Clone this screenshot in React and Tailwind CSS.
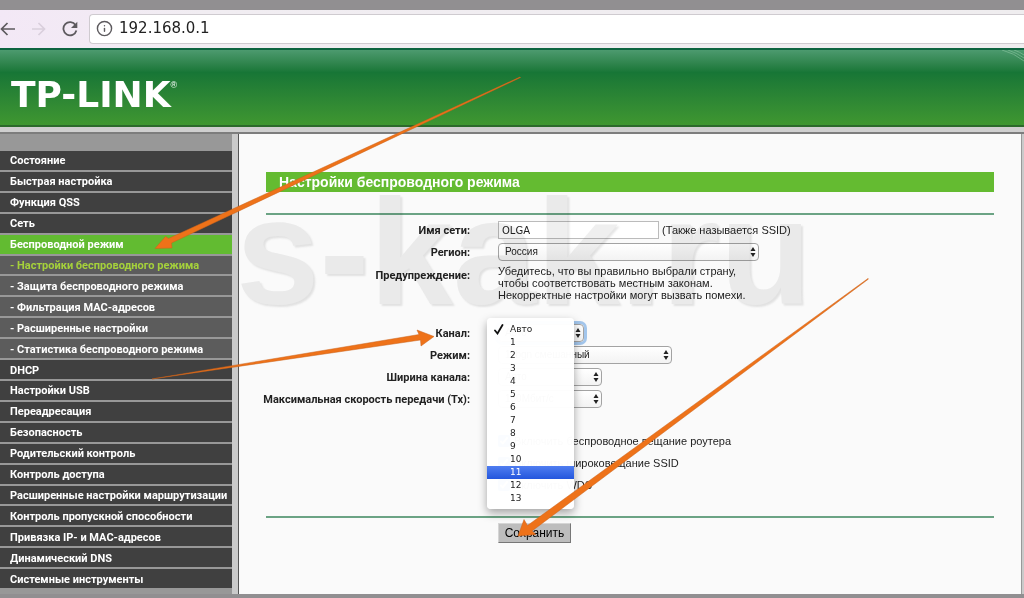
import { useState } from "react";
import { Info } from "lucide-react";

const menu = [
  { title: "Состояние" },
  { title: "Быстрая настройка" },
  { title: "Функция QSS" },
  { title: "Сеть" },
  { title: "Беспроводной режим", active: true },
  { title: "- Настройки беспроводного режима", sub: true, active: true },
  { title: "- Защита беспроводного режима", sub: true },
  { title: "- Фильтрация MAC-адресов", sub: true },
  { title: "- Расширенные настройки", sub: true },
  { title: "- Статистика беспроводного режима", sub: true },
  { title: "DHCP" },
  { title: "Настройки USB" },
  { title: "Переадресация" },
  { title: "Безопасность" },
  { title: "Родительский контроль" },
  { title: "Контроль доступа" },
  { title: "Расширенные настройки маршрутизации" },
  { title: "Контроль пропускной способности" },
  { title: "Привязка IP- и MAC-адресов" },
  { title: "Динамический DNS" },
  { title: "Системные инструменты" },
];

const channels = ["Авто", "1", "2", "3", "4", "5", "6", "7", "8", "9", "10", "11", "12", "13"];

function menuColor(item) {
  if (item.sub) return item.active ? "bg-[#5c5c5c] text-[#a5d13b]" : "bg-[#5c5c5c] text-white";
  return item.active ? "bg-[#62bb31] text-white" : "bg-[#404040] text-white";
}

function BrowserBar() {
  return (
    <div className="flex h-[38px] items-center bg-gradient-to-r from-[#f3e8f6] via-[#f1edf2] via-20% to-[#efedef] pt-[3px] pb-1">
      <div className="flex w-[89px] shrink-0 items-center gap-4 text-[#5d5a5e]">
        <button aria-label="Назад">
          <svg width="15" height="14" viewBox="0 0 15 14" fill="none" stroke="currentColor" strokeWidth="1.7">
            <path d="M15 7H2M7.500 1L1.500 7l6 6" />
          </svg>
        </button>
        <button aria-label="Вперёд" className="text-[#d9cfdc]">
          <svg width="15" height="14" viewBox="0 0 15 14" fill="none" stroke="currentColor" strokeWidth="1.7">
            <path d="M1 7h12M7.500 1l6 6-6 6" />
          </svg>
        </button>
        <button aria-label="Обновить">
          <svg width="16" height="16" viewBox="0 0 16 16" fill="none">
            <path d="M13.600 4.200A6.600 6.600 0 1 0 14.400 9.500" stroke="currentColor" strokeWidth="1.8" />
            <path d="M15.300 0.800v6.200H9z" fill="currentColor" />
          </svg>
        </button>
      </div>
      <div className="flex h-[30px] flex-1 items-center gap-[6px] rounded-l border border-r-0 border-[#cfcbd0] bg-white pl-[6px]">
        <Info size={17} strokeWidth={2} className="shrink-0 text-[#5d5a5e]" />
        <input
          aria-label="Адрес"
          defaultValue="192.168.0.1"
          className="w-full bg-transparent font-['DejaVu_Sans',sans-serif] text-[15px] text-[#222] outline-none"
        />
      </div>
    </div>
  );
}

function Header() {
  return (
    <header className="relative flex h-[79px] items-center border-t-2 border-b-2 border-t-[#0d6440] border-b-[#2c6a2b] bg-gradient-to-b from-[#4c9a6f] via-[#177636] via-30% to-[#3f9730] pt-3.5 pl-[11px]">
      <div className="flex items-start text-white">
        <span className="font-['DejaVu_Sans',sans-serif] text-[36px] leading-8 font-bold">TP-LINK</span>
        <span className="font-['Liberation_Sans',sans-serif] text-[9px] leading-3">®</span>
      </div>
      <svg className="absolute top-0 right-0" width="22" height="14" viewBox="0 0 22 14" fill="none">
        <path d="M0 0Q12 3 22 11M6 0Q15 3 22 8M12 0Q18 2 22 5" stroke="#8cc4a2" strokeOpacity="0.6" />
      </svg>
    </header>
  );
}

function Sidebar() {
  return (
    <nav className="flex w-[232px] shrink-0 flex-col bg-[#989898] pt-[17px] pb-1">
      <ul className="flex flex-1 flex-col">
        {menu.map((item) => (
          <li key={item.title} className="flex min-h-5 flex-1 border-b-2 border-[#989898]">
            <a
              href="#"
              className={`flex flex-1 items-center pt-0.5 pl-[10px] font-[Roboto,sans-serif] text-[11px] leading-4 font-bold whitespace-nowrap ${menuColor(item)}`}
            >
              {item.title}
            </a>
          </li>
        ))}
      </ul>
    </nav>
  );
}

function Select({ id, value, className, focused }) {
  return (
    <div className={`relative ${className}`}>
      <select
        id={id}
        className={`h-[18px] w-full appearance-none rounded border border-[#a3a3a3] bg-gradient-to-b from-white to-[#f3f3f3] pl-1.5 text-[10px] leading-4 text-[#222] outline-none ${
          focused ? "ring-3 ring-[#a3c6ec]" : ""
        }`}
      >
        <option>{value}</option>
      </select>
      <svg className="pointer-events-none absolute top-1 right-[3px]" width="6" height="10" viewBox="0 0 6 10" fill="#222">
        <path d="M3 0l2.500 4h-5zM3 10l2.500-4h-5z" />
      </svg>
    </div>
  );
}

function Row({ label, htmlFor, children }) {
  return (
    <div className="flex min-h-[22px] items-center gap-7">
      <label
        htmlFor={htmlFor}
        className="flex w-[204px] shrink-0 justify-end pt-0.5 font-[Roboto,sans-serif] font-bold whitespace-nowrap"
      >
        {label}
      </label>
      {children}
    </div>
  );
}

function Check({ label }) {
  return (
    <label className="ml-[232px] flex h-[22px] items-center gap-1">
      <input type="checkbox" defaultChecked className="size-3" />
      {label}
    </label>
  );
}

function ChannelList({ current, onPick }) {
  return (
    <div
      role="listbox"
      aria-label="Канал"
      className="absolute -top-[6px] -left-[11px] z-20 flex w-[87px] flex-col rounded bg-white/98 pt-[5px] pb-1 font-['DejaVu_Sans',sans-serif] text-[9px] leading-[13px] text-[#222] shadow-[0_4px_10px_rgba(0,0,0,0.35)]"
    >
      {channels.map((channel) => (
        <button
          key={channel}
          role="option"
          aria-selected={channel === "Авто"}
          onClick={() => onPick(channel)}
          className={`flex h-[13px] items-center ${
            channel === current ? "bg-gradient-to-b from-[#4f7df0] to-[#2456dd] text-white" : ""
          }`}
        >
          <span className="flex w-[23px] justify-center">
            {channel === "Авто" && (
              <svg width="10" height="11" viewBox="0 0 10 11" fill="none">
                <path d="M1 6.500l2.500 3L8.500 1" stroke="#111" strokeWidth="1.8" strokeLinecap="round" />
              </svg>
            )}
          </span>
          {channel}
        </button>
      ))}
    </div>
  );
}

function Watermark() {
  return (
    <div
      aria-hidden="true"
      className="pointer-events-none absolute top-[33px] -left-[3px] z-10 text-[150px] leading-[170px] font-bold whitespace-nowrap text-[#eaeaea] mix-blend-multiply opacity-75 [text-shadow:2px_2px_2px_#dedede]"
    >
      s-kak.ru
    </div>
  );
}

function Settings() {
  const [channel, setChannel] = useState("11");

  return (
    <main className="relative flex-1 border-l border-[#555] bg-[#fafafa] px-[27px] pt-[38px] pb-6 text-[11px] text-[#222]">
      <h1 className="h-5 bg-[#64bb31] pl-[13px] text-[14px] leading-5 font-bold text-white">
        Настройки беспроводного режима
      </h1>
      <form className="mt-[21px] border-t-2 border-[#6ba384] pt-1" onSubmit={(e) => e.preventDefault()}>
        <Row label="Имя сети:" htmlFor="ssid">
          <div className="flex items-center gap-[3px]">
            <input
              id="ssid"
              defaultValue="OLGA"
              className="h-[18px] w-[161px] border border-[#bbb] bg-white px-[3px] font-['DejaVu_Sans',sans-serif] text-[10px] outline-none"
            />
            <span>(Также называется SSID)</span>
          </div>
        </Row>
        <Row label="Регион:" htmlFor="region">
          <Select id="region" value="Россия" className="w-[261px]" />
        </Row>
        <div className="flex gap-7 pt-0.5 pb-[21px]">
          <span className="w-[204px] shrink-0 text-right font-[Roboto,sans-serif] leading-[22px] font-bold">
            Предупреждение:
          </span>
          <p className="leading-3 whitespace-nowrap">
            Убедитесь, что вы правильно выбрали страну,
            <br />
            чтобы соответствовать местным законам.
            <br />
            Некорректные настройки могут вызвать помехи.
          </p>
        </div>
        <Row label="Канал:" htmlFor="channel">
          <div className="relative w-[86px]">
            <Select id="channel" value="Авто" className="w-full" focused />
            <ChannelList current={channel} onPick={setChannel} />
          </div>
        </Row>
        <Row label="Режим:" htmlFor="mode">
          <Select id="mode" value="11bgn смешанный" className="w-[174px]" />
        </Row>
        <Row label="Ширина канала:" htmlFor="width">
          <Select id="width" value="Авто" className="w-[104px]" />
        </Row>
        <Row label="Максимальная скорость передачи (Tx):" htmlFor="rate">
          <Select id="rate" value="150Мбит/с" className="w-[104px]" />
        </Row>
        <div className="mt-5">
          <Check label="Включить беспроводное вещание роутера" />
          <Check label="Включить широковещание SSID" />
          <Check label="Включить WDS" />
        </div>
        <div className="mt-5 border-t-2 border-[#6ba384] pt-[5px] pl-[232px]">
          <button className="h-5 w-[73px] border border-[#d5d5d5] border-r-[#777] border-b-[#777] bg-[#bdbdbd] text-[12px] leading-4 text-black">
            Сохранить
          </button>
        </div>
      </form>
      <Watermark />
    </main>
  );
}

// Hand-drawn pointers laid over the whole page
function Arrows() {
  return (
    <svg
      className="pointer-events-none absolute top-0 left-0 z-30"
      width="1024"
      height="598"
      viewBox="0 0 1024 598"
      fill="#ee7219"
      stroke="#c9621c"
      strokeWidth="0.5"
      strokeLinejoin="round"
    >
      <path d="M520 77L520.500 77.500L171.500 243L172 248L155 248.500L165.500 236.500L168.500 238.500Z" />
      <path d="M152 379L419 334.500L417 330L434 336.500L421 346L420.500 340Z" />
      <path d="M868 278.500L868.500 279L532 531L536 534.500L518 536L524 519.500L527.500 525.500Z" />
    </svg>
  );
}

export default function App() {
  return (
    <div className="relative flex min-h-screen flex-col overflow-hidden bg-[#918f91] font-['Liberation_Sans',Arial,sans-serif]">
      <div className="h-[10px]" />
      <BrowserBar />
      <Header />
      <div className="h-[7px] border-b-2 border-[#7d7d7d] bg-[#cfcfcf]" />
      <div className="mb-1 flex flex-1">
        <Sidebar />
        <div className="flex flex-1 border-x-[6px] border-r-2 border-[#cacaca]">
          <Settings />
          <div className="w-px bg-[#999]" />
        </div>
      </div>
      <Arrows />
    </div>
  );
}
